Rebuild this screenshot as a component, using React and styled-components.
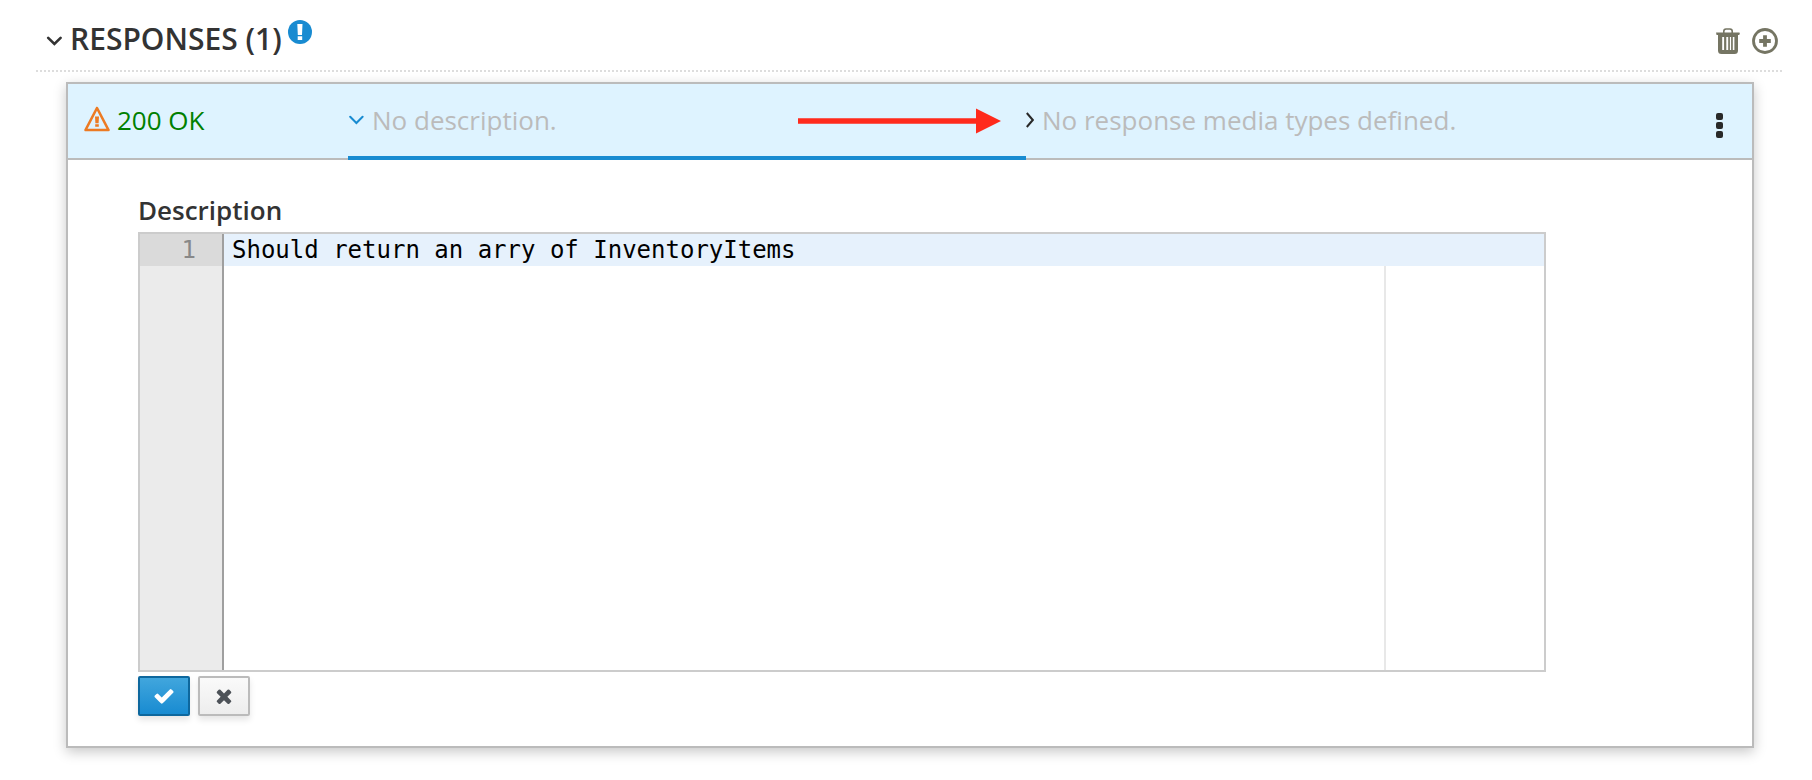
import React from "react";
import styled, { createGlobalStyle, css } from "styled-components";

const GlobalStyle = createGlobalStyle`
  * { box-sizing: border-box; }
  body {
    margin: 0;
    background: #fff;
    color: #333;
    font-family: "Open Sans", "Noto Sans", sans-serif;
    font-size: 26px;
    line-height: 36px;
  }
  svg { display: block; flex: none; }
`;

const plainButton = css`
  margin: 0;
  padding: 0;
  border: 0;
  background: none;
  font: inherit;
  color: inherit;
  cursor: pointer;
`;

const Section = styled.section`
  padding: 0 28px 32px 36px;
`;

const SectionHeader = styled.header`
  display: flex;
  align-items: center;
  padding: 17px 6px 11px 10px;
  background: repeating-linear-gradient(to right, #ddd 0 2px, transparent 2px 4px) left bottom / 100% 2px no-repeat;
`;

const Heading = styled.h2`
  margin: 0;
  font-size: 30px;
  font-weight: 600;
  line-height: 44px;
`;

const SectionToggle = styled.button`
  ${plainButton}
  display: flex;
  align-items: center;
  gap: 8px;
  svg { margin-top: 4px; }
`;

const InfoBadge = styled.span`
  align-self: flex-start;
  margin: 3px 0 0 6px;
`;

const Actions = styled.div`
  display: flex;
  gap: 12px;
  margin-left: auto;
  padding-top: 4px;
`;

const IconButton = styled.button`
  ${plainButton}
  color: #757563;
`;

const Card = styled.article`
  margin: 10px 30px 0;
  border: 2px solid #bbb;
  background: #fff;
  box-shadow: 0 4px 12px rgba(3, 3, 3, 0.22);
`;

const ResponseBar = styled.div`
  display: grid;
  grid-template-columns: 280px minmax(0, 1fr) minmax(0, 1fr) 48px;
  min-height: 76px;
  border-bottom: 2px solid #bbb;
  background: #def3ff;
`;

const Status = styled.div`
  display: flex;
  align-items: center;
  gap: 6px;
  padding: 0 0 2px 16px;
  color: #008000;
`;

const Tab = styled.button`
  ${plainButton}
  display: flex;
  align-items: center;
  gap: 8px;
  margin-bottom: -2px;
  border-bottom: 4px solid ${(p) => (p.$active ? "#188bd1" : "transparent")};
  color: #bbb;
  white-space: nowrap;
`;

const Pointer = styled.svg`
  margin: 2px 25px 0 auto;
`;

const MenuButton = styled.button`
  ${plainButton}
  display: flex;
  align-items: center;
  padding: 8px 0 0 12px;
  color: #292929;
`;

const Form = styled.form`
  padding: 32px 206px 30px 70px;
`;

const Label = styled.label`
  display: block;
  margin-bottom: 4px;
  font-weight: 600;
`;

const Editor = styled.div`
  display: flex;
  min-height: 440px;
  border: 2px solid #ccc;
  font-family: "DejaVu Sans Mono", monospace;
  font-size: 24px;
  line-height: 32px;
`;

const Gutter = styled.div`
  flex: 0 0 84px;
  border-right: 2px solid #9f9f9f;
  background: #ebebeb;
`;

const LineNumber = styled.div`
  padding-right: 26px;
  background: #dadada;
  color: #888;
  text-align: right;
`;

const CodeArea = styled.textarea`
  flex: 1;
  min-width: 0;
  margin: 0;
  padding: 0 8px;
  border: 0;
  outline: 0;
  resize: none;
  font: inherit;
  color: #000;
  background:
    linear-gradient(#e6f1fc, #e6f1fc) 0 0 / 100% 32px no-repeat,
    linear-gradient(#e8e8e8, #e8e8e8) 1160px 0 / 2px 100% no-repeat,
    #fff;
`;

const ButtonRow = styled.div`
  display: flex;
  gap: 8px;
  margin-top: 4px;
`;

const FormButton = styled.button`
  display: flex;
  align-items: center;
  justify-content: center;
  width: 52px;
  height: 40px;
  padding: 0;
  border: 2px solid ${(p) => (p.$primary ? "#0d679d" : "#bbb")};
  border-radius: 2px;
  background: ${(p) =>
    p.$primary ? "linear-gradient(#41a6dd, #188bd1)" : "linear-gradient(#fafafa, #ededed)"};
  color: ${(p) => (p.$primary ? "#fff" : "#4d5258")};
  box-shadow: 0 4px 6px rgba(3, 3, 3, 0.1);
  cursor: pointer;
`;

function AngleDown({ color, weight }) {
  return (
    <svg width="16" height="10" viewBox="0 0 16 10" fill="none" stroke={color} strokeWidth={weight} strokeLinecap="round" aria-hidden="true">
      <path d="M2.200 1.800 8.400 8l6.200-6.200" />
    </svg>
  );
}

function AngleRight() {
  return (
    <svg width="8" height="16" viewBox="0 0 8 16" fill="none" stroke="#292929" strokeWidth="2" aria-hidden="true">
      <path d="M.8 1l6 7-6 7" />
    </svg>
  );
}

function TrashIcon() {
  return (
    <svg width="24" height="26" viewBox="0 0 24 26" fill="currentColor" aria-hidden="true">
      <path fillRule="evenodd" d="M7 4.500V3.200Q7 .2 10 .2h4q3 0 3 3v1.300h6.200q.6 0 .6.800T23.200 7H22v15.500Q22 26 18.500 26h-13Q2 26 2 22.500V7H.8Q.2 7 .2 5.300t.6-.8zM8.600 4.500h6.800V3.300q0-1.500-1.500-1.500h-3.800q-1.500 0-1.500 1.500zM6.200 9v13h1.900V9zm4.100 0v13h1.900V9zm3.600 0v13h1.200V9zm2.900 0v13h1.600V9z" />
    </svg>
  );
}

function AddCircleIcon() {
  return (
    <svg width="26" height="26" viewBox="0 0 26 26" fill="none" stroke="currentColor" aria-hidden="true">
      <circle cx="13" cy="13" r="11.500" strokeWidth="2.800" />
      <path d="M13 7.200v11.600M7.200 13h11.600" strokeWidth="3.800" />
    </svg>
  );
}

function InfoIcon() {
  return (
    <svg width="24" height="24" viewBox="0 0 24 24" role="img" aria-label="Information">
      <circle cx="12" cy="12" r="12" fill="#188bd1" />
      <path fill="#fff" d="M9.300 4h5.200l-.5 11h-4.200zM9.700 16.300h4.500v3.700H9.700z" />
    </svg>
  );
}

function WarningIcon() {
  return (
    <svg width="27" height="28" viewBox="0 0 27 28" role="img" aria-label="Warning">
      <path d="M13 2 1.500 24h23z" fill="none" stroke="#ec7a23" strokeWidth="2.600" strokeLinejoin="round" />
      <path d="M11 10.600h4l-.4 6.600h-3.200zM11.200 18.300h3.600v2.500h-3.600z" fill="#ec7a23" />
    </svg>
  );
}

function KebabIcon() {
  return (
    <svg width="7" height="25" viewBox="0 0 7 25" fill="currentColor" aria-hidden="true">
      <rect width="7" height="7" rx="2" />
      <rect y="9" width="7" height="7" rx="2" />
      <rect y="18" width="7" height="7" rx="2" />
    </svg>
  );
}

function CheckIcon() {
  return (
    <svg width="22" height="22" viewBox="0 0 1792 1792" fill="currentColor" aria-hidden="true">
      <path d="M1671 566q0 40-28 68l-724 724-136 136q-28 28-68 28t-68-28l-136-136-362-362q-28-28-28-68t28-68l136-136q28-28 68-28t68 28l294 295 656-657q28-28 68-28t68 28l136 136q28 28 28 68z" />
    </svg>
  );
}

function CloseIcon() {
  return (
    <svg width="22" height="22" viewBox="0 0 1792 1792" fill="currentColor" aria-hidden="true">
      <path d="M1490 1322q0 40-28 68l-136 136q-28 28-68 28t-68-28l-294-294-294 294q-28 28-68 28t-68-28l-136-136q-28-28-28-68t28-68l294-294-294-294q-28-28-28-68t28-68l136-136q28-28 68-28t68 28l294 294 294-294q28-28 68-28t68 28l136 136q28 28 28 68t-28 68l-294 294 294 294q28 28 28 68z" />
    </svg>
  );
}

function PointerArrow() {
  return (
    <Pointer width="203" height="26" viewBox="0 0 203 26" aria-hidden="true">
      <path d="M0 10.300h178V.5L203 13l-25 12.500v-9.800H0z" fill="#ff2a1c" />
    </Pointer>
  );
}

export default function App() {
  return (
    <>
      <GlobalStyle />
      <Section>
        <SectionHeader>
          <Heading>
            <SectionToggle type="button" aria-expanded="true">
              <AngleDown color="#333" weight="2.600" />
              RESPONSES (1)
            </SectionToggle>
          </Heading>
          <InfoBadge><InfoIcon /></InfoBadge>
          <Actions>
            <IconButton type="button" aria-label="Delete all responses"><TrashIcon /></IconButton>
            <IconButton type="button" aria-label="Add a response"><AddCircleIcon /></IconButton>
          </Actions>
        </SectionHeader>
        <Card>
          <ResponseBar>
            <Status><WarningIcon />200 OK</Status>
            <Tab type="button" $active aria-expanded="true">
              <AngleDown color="#188bd1" weight="2" />
              No description.
              <PointerArrow />
            </Tab>
            <Tab type="button" aria-expanded="false">
              <AngleRight />
              No response media types defined.
            </Tab>
            <MenuButton type="button" aria-label="Response actions"><KebabIcon /></MenuButton>
          </ResponseBar>
          <Form onSubmit={(e) => e.preventDefault()}>
            <Label htmlFor="description">Description</Label>
            <Editor>
              <Gutter><LineNumber>1</LineNumber></Gutter>
              <CodeArea id="description" spellCheck={false} defaultValue="Should return an arry of InventoryItems" />
            </Editor>
            <ButtonRow>
              <FormButton type="submit" $primary aria-label="Save"><CheckIcon /></FormButton>
              <FormButton type="button" aria-label="Cancel"><CloseIcon /></FormButton>
            </ButtonRow>
          </Form>
        </Card>
      </Section>
    </>
  );
}
